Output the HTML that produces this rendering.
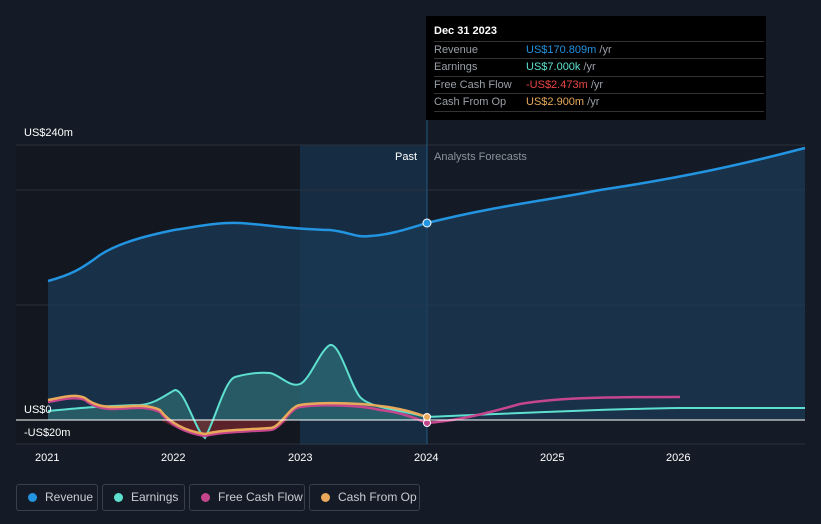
<!DOCTYPE html>
<html><head><style>
body{margin:0;background:#151b26;width:821px;height:524px;overflow:hidden;font-family:"Liberation Sans",sans-serif;}
.leg{position:absolute;top:484px;height:27px;border:1px solid #3a404b;border-radius:3px;color:#c9ccd1;font-size:12px;line-height:25px;box-sizing:border-box;padding-left:28px}
.leg i{position:absolute;left:11px;top:8px;width:9px;height:9px;border-radius:50%}
.tt{position:absolute;left:426px;top:16px;width:340px;height:104px;background:#000;font-size:11px;color:#9aa0a8}
.tt div{position:absolute;left:8px;width:330px;border-top:1px solid #333;height:17px;line-height:17px}
</style></head><body>
<svg width="821" height="524" style="position:absolute;left:0;top:0">
<rect x="16" y="145" width="284" height="300" fill="#121720"/>
<rect x="300" y="145" width="127" height="300" fill="#17314a" opacity="0.8"/>
<g stroke="#2a303a" stroke-width="1">
<line x1="16" y1="145" x2="805" y2="145"/><line x1="16" y1="190" x2="805" y2="190"/>
<line x1="16" y1="305" x2="805" y2="305"/><line x1="16" y1="444" x2="805" y2="444"/>
</g>
<line x1="427" y1="120" x2="427" y2="444" stroke="#1e5a86"/>
<path d="M48,281 C70,275 80,270 100,255 C120,242 150,235 174,230 C200,226 220,222 240,223 C270,225 290,229 330,230 C350,232 355,238 370,236 C390,235 410,228 427,223 C500,205 550,200 600,190 C680,178 740,165 805,148 L805,420 L48,420Z" fill="#1b3a55" opacity="0.75"/>
<path d="M48,281 C70,275 80,270 100,255 C120,242 150,235 174,230 C200,226 220,222 240,223 C270,225 290,229 330,230 C350,232 355,238 370,236 C390,235 410,228 427,223 C500,205 550,200 600,190 C680,178 740,165 805,148" fill="none" stroke="#2394e0" stroke-width="2.5"/>
<path d="M48,411 C80,408 100,406 140,405 C155,404 165,395 175,390 C185,390 195,430 205,438 C215,420 225,380 235,377 C250,373 260,372 270,373 C280,375 290,388 300,384 C310,380 320,350 330,345 C340,343 350,385 360,397 C370,408 400,410 427,417 L427,420 L48,420Z" fill="#3a8f8a" opacity="0.45"/>
<path d="M160,420 C170,425 185,433 205,436 C220,432 240,432 270,430 C280,430 285,420 290,420Z" fill="#7a2a2e" opacity="0.7"/>
<path d="M48,411 C80,408 100,406 140,405 C155,404 165,395 175,390 C185,390 195,430 205,438 C215,420 225,380 235,377 C250,373 260,372 270,373 C280,375 290,388 300,384 C310,380 320,350 330,345 C340,343 350,385 360,397 C370,408 400,410 427,417 C500,414 600,409 680,408 L805,408" fill="none" stroke="#5ee0cf" stroke-width="2"/>
<path d="M48,402 C60,400 75,396 85,400 C95,408 105,409 115,409 C130,409 145,405 160,412 C170,425 185,433 205,436 C220,432 240,432 270,430 C280,430 290,408 300,407 C320,404 360,405 380,410 C400,412 415,418 427,423 C450,421 470,418 520,404 C560,397 620,397 680,397" fill="none" stroke="#c5468d" stroke-width="2.5"/>
<path d="M48,400 C60,398 75,393 85,398 C95,406 105,407 115,407 C130,407 145,403 160,410 C170,423 185,431 205,434 C220,430 240,430 270,428 C280,428 290,406 300,405 C320,402 360,403 380,406 C400,408 415,413 427,417" fill="none" stroke="#e8a95a" stroke-width="2.5"/>
<line x1="16" y1="420" x2="805" y2="420" stroke="#fff" stroke-width="1"/>
<circle cx="427" cy="223" r="4" fill="#2394e0" stroke="#fff" stroke-width="1"/>
<circle cx="427" cy="423" r="3.5" fill="#c5468d" stroke="#fff"/>
<circle cx="427" cy="417" r="3.5" fill="#e8a95a" stroke="#fff"/>
<g font-size="11" fill="#fff" font-family="Liberation Sans">
<text x="24" y="136">US$240m</text><text x="24" y="413">US$0</text><text x="24" y="436">-US$20m</text>
<text x="35" y="461">2021</text><text x="161" y="461">2022</text><text x="288" y="461">2023</text><text x="414" y="461">2024</text><text x="540" y="461">2025</text><text x="666" y="461">2026</text>
<text x="395" y="160">Past</text><text x="434" y="160" fill="#8c929b">Analysts Forecasts</text>
</g>
</svg>
<div class="tt">
<span style="position:absolute;left:8px;top:9px;color:#fff;font-weight:bold;font-size:11px">Dec 31 2023</span>
<div style="top:25px">Revenue<span style="position:absolute;left:92px;color:#2394e0">US$170.809m <span style="color:#9aa0a8">/yr</span></span></div>
<div style="top:42px">Earnings<span style="position:absolute;left:92px;color:#5ee0cf">US$7.000k <span style="color:#9aa0a8">/yr</span></span></div>
<div style="top:60px">Free Cash Flow<span style="position:absolute;left:92px;color:#e84545">-US$2.473m <span style="color:#9aa0a8">/yr</span></span></div>
<div style="top:77px">Cash From Op<span style="position:absolute;left:92px;color:#e8a95a">US$2.900m <span style="color:#9aa0a8">/yr</span></span></div>
<div style="top:95px"></div>
</div>
<div class="leg" style="left:16px;width:82px"><i style="background:#2394e0"></i>Revenue</div>
<div class="leg" style="left:102px;width:83px"><i style="background:#5ee0cf"></i>Earnings</div>
<div class="leg" style="left:189px;width:116px"><i style="background:#c5468d"></i>Free Cash Flow</div>
<div class="leg" style="left:309px;width:111px"><i style="background:#e8a95a"></i>Cash From Op</div>
</body></html>
